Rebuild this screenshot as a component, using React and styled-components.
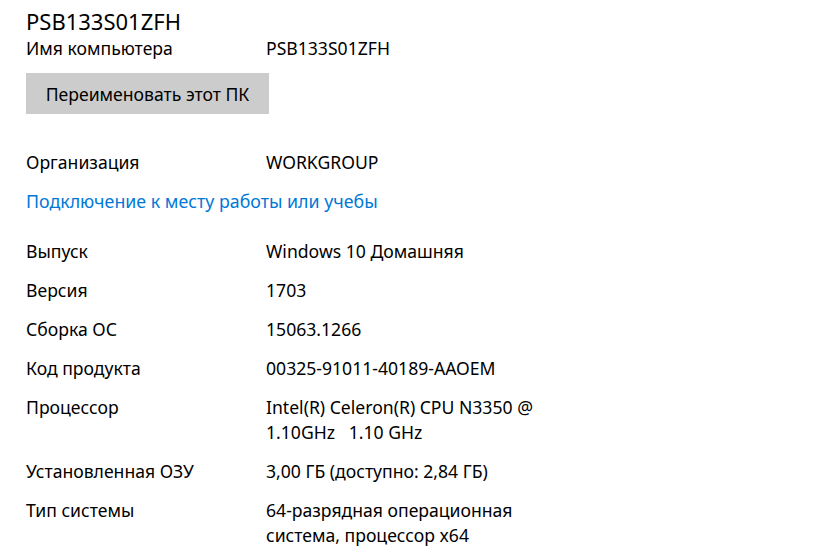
import React from "react";
import styled, { createGlobalStyle } from "styled-components";

const Global = createGlobalStyle`
  html, body { margin: 0; padding: 0; background: #ffffff; }
  body { font-family: "Segoe UI", "Noto Sans", "Open Sans", sans-serif; color: #000; }
`;

const Page = styled.div`
  width: 815px;
  height: 552px;
  overflow: hidden;
  padding: 7px 0 0 26px;
  box-sizing: border-box;
  display: flex;
  flex-direction: column;
`;

const Title = styled.h1`
  margin: 0;
  font-size: 22px;
  font-weight: 400;
  line-height: 29px;
`;

const Section = styled.div`
  display: flex;
  flex-direction: column;
  gap: 14px;
  margin-top: ${(p) => p.$top}px;
`;

const Row = styled.div`
  display: grid;
  grid-template-columns: 240px 340px;
  font-size: 17.6px;
  line-height: 25px;
`;

const Label = styled.div``;
const Value = styled.div`
  white-space: pre;
`;

const Button = styled.button`
  align-self: flex-start;
  width: 243px;
  height: 41px;
  margin-top: 12px;
  border: none;
  background: #cccccc;
  font-family: inherit;
  font-size: 17.6px;
  color: #000;
  padding: 0;
`;

const Link = styled.a`
  font-size: 17.8px;
  line-height: 25px;
  color: #0078d7;
  text-decoration: none;
  align-self: flex-start;
`;

const rows = [
  ["Выпуск", "Windows 10 Домашняя"],
  ["Версия", "1703"],
  ["Сборка ОС", "15063.1266"],
  ["Код продукта", "00325-91011-40189-AAOEM"],
  ["Процессор", "Intel(R) Celeron(R) CPU N3350 @\n1.10GHz   1.10 GHz"],
  ["Установленная ОЗУ", "3,00 ГБ (доступно: 2,84 ГБ)"],
  ["Тип системы", "64-разрядная операционная\nсистема, процессор x64"],
];

export default function App() {
  return (
    <>
      <Global />
      <Page>
        <Title>PSB133S01ZFH</Title>
        <Section $top={0}>
          <Row>
            <Label>Имя компьютера</Label>
            <Value>PSB133S01ZFH</Value>
          </Row>
        </Section>
        <Button>Переименовать этот ПК</Button>
        <Section $top={36}>
          <Row>
            <Label>Организация</Label>
            <Value>WORKGROUP</Value>
          </Row>
          <Link href="#">Подключение к месту работы или учебы</Link>
        </Section>
        <Section $top={25}>
          {rows.map(([l, v]) => (
            <Row key={l}>
              <Label>{l}</Label>
              <Value>{v}</Value>
            </Row>
          ))}
        </Section>
      </Page>
    </>
  );
}
